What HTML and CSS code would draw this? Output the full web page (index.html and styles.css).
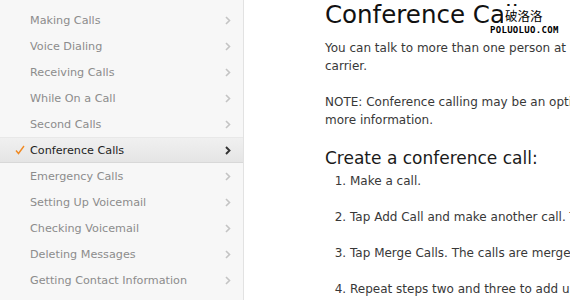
FILE: index.html
```html
<!DOCTYPE html>
<html lang="en">
<head>
    <meta charset="UTF-8">
    <title>Conference Calls</title>
    <link rel="stylesheet" href="styles.css">
</head>
<body>
    <div class="page">
        <!-- Left chapter menu -->
        <ul class="menu">
            <li class="item"><span>Making Calls</span><svg class="chev" viewBox="0 0 6 9"><path d="M1 1l3.5 3.5L1 8"/></svg></li>
            <li class="item"><span>Voice Dialing</span><svg class="chev" viewBox="0 0 6 9"><path d="M1 1l3.5 3.5L1 8"/></svg></li>
            <li class="item"><span>Receiving Calls</span><svg class="chev" viewBox="0 0 6 9"><path d="M1 1l3.5 3.5L1 8"/></svg></li>
            <li class="item"><span>While On a Call</span><svg class="chev" viewBox="0 0 6 9"><path d="M1 1l3.5 3.5L1 8"/></svg></li>
            <li class="item"><span>Second Calls</span><svg class="chev" viewBox="0 0 6 9"><path d="M1 1l3.5 3.5L1 8"/></svg></li>
            <li class="item active">
                <svg class="check" viewBox="0 0 10 10"><path d="M1 5.5l2.5 3L9 1"/></svg>
                <span>Conference Calls</span><svg class="chev" viewBox="0 0 6 9"><path d="M1 1l3.5 3.5L1 8"/></svg>
            </li>
            <li class="item"><span>Emergency Calls</span><svg class="chev" viewBox="0 0 6 9"><path d="M1 1l3.5 3.5L1 8"/></svg></li>
            <li class="item"><span>Setting Up Voicemail</span><svg class="chev" viewBox="0 0 6 9"><path d="M1 1l3.5 3.5L1 8"/></svg></li>
            <li class="item"><span>Checking Voicemail</span><svg class="chev" viewBox="0 0 6 9"><path d="M1 1l3.5 3.5L1 8"/></svg></li>
            <li class="item"><span>Deleting Messages</span><svg class="chev" viewBox="0 0 6 9"><path d="M1 1l3.5 3.5L1 8"/></svg></li>
            <li class="item"><span>Getting Contact Information</span><svg class="chev" viewBox="0 0 6 9"><path d="M1 1l3.5 3.5L1 8"/></svg></li>
        </ul>

        <!-- Article -->
        <div class="content">
            <h1>Conference Calls</h1>
            <p>You can talk to more than one person at a time, depending on your wireless<br>carrier.</p>
            <p>NOTE: Conference calling may be an optional service. Contact your carrier for<br>more information.</p>
            <h2>Create a conference call:</h2>
            <ol>
                <li>Make a call.</li>
                <li>Tap Add Call and make another call. The first call is put on hold.</li>
                <li>Tap Merge Calls. The calls are merged into one line.</li>
                <li>Repeat steps two and three to add up to five calls.</li>
            </ol>
        </div>
    </div>

    <!-- site watermark -->
    <div class="mark">
        <span class="mark-cn">破洛洛</span>
        <span class="mark-url">POLUOLUO.COM</span>
    </div>
</body>
</html>
```

FILE: styles.css
```css
body {
    margin: 0;
    background: #fff;
    font-family: "DejaVu Sans", Verdana, sans-serif;
    overflow: hidden;
}

.page {
    display: flex;
    height: 300px;
    overflow: hidden;
}

/* Left menu */
.menu {
    list-style: none;
    margin: 0;
    padding: 7px 0 0;
    width: 243px;
    flex-shrink: 0;
    background: #f7f7f7;
    border-right: 1px solid #e2e2e2;
}
.item {
    position: relative;
    display: flex;
    align-items: center;
    justify-content: space-between;
    height: 26px;
    padding: 0 12px 0 30px;
    font-size: 11.2px;
    color: #8c8c8c;
}
.chev {
    width: 6px;
    height: 9px;
    fill: none;
    stroke: #c4c4c4;
    stroke-width: 1.6;
}
.item.active {
    height: 24px;
    color: #1e1e1e;
    background: linear-gradient(#f0f0f0, #e5e5e5);
    border-top: 1px solid #e8e8e8;
    border-bottom: 1px solid #d8d8d8;
}
.item.active .chev {
    stroke: #333;
    stroke-width: 1.9;
}
.check {
    position: absolute;
    left: 15px;
    top: 7px;
    width: 10px;
    height: 10px;
    fill: none;
    stroke: #f08a24;
    stroke-width: 1.4;
}

/* Article */
.content {
    padding-left: 81px;
    color: #383838;
    font-size: 12px;
    line-height: 18px;
    white-space: nowrap;
}
.content h1 {
    margin: 0 0 9px;
    font-size: 24.5px;
    font-weight: normal;
    line-height: 30px;
    color: #111;
}
.content p {
    margin: 0 0 18px;
}
.content h2 {
    margin: 18px 0 3px;
    font-size: 17px;
    font-weight: normal;
    line-height: 22px;
    color: #1a1a1a;
}
.content ol {
    margin: 0;
    padding-left: 25px;
}
.content li {
    margin-bottom: 18px;
}

/* Watermark over the heading */
.mark {
    position: absolute;
    top: 6px;
    left: 490px;
    width: 72px;
    display: flex;
    flex-direction: column;
}
.mark-cn {
    margin-left: 13px;
    padding-left: 2px;
    font-family: "Noto Sans CJK SC", sans-serif;
    font-size: 12.5px;
    line-height: 20px;
    color: #000;
    background: #fff;
}
.mark-url {
    font-family: "DejaVu Sans Mono", monospace;
    font-size: 9px;
    line-height: 9px;
    font-weight: bold;
    letter-spacing: 0.3px;
    color: #000;
}
```
